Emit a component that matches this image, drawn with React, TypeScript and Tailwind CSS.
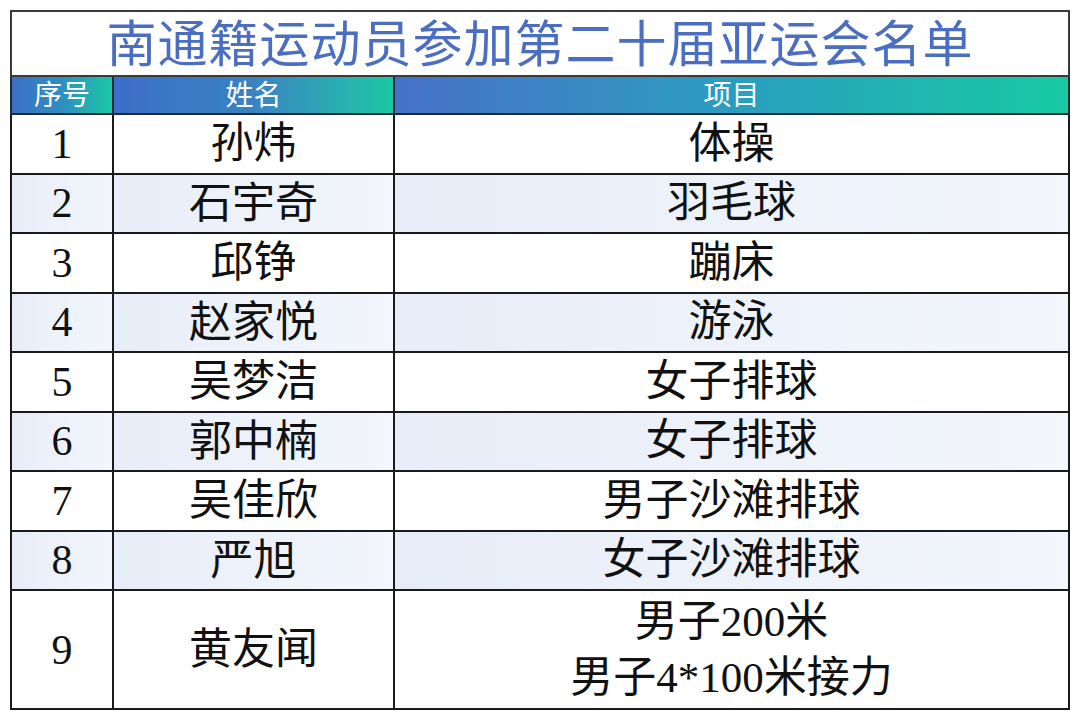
const rows: { no: number; name: string; events: string[] }[] = [
  { no: 1, name: '孙炜', events: ['体操'] },
  { no: 2, name: '石宇奇', events: ['羽毛球'] },
  { no: 3, name: '邱铮', events: ['蹦床'] },
  { no: 4, name: '赵家悦', events: ['游泳'] },
  { no: 5, name: '吴梦洁', events: ['女子排球'] },
  { no: 6, name: '郭中楠', events: ['女子排球'] },
  { no: 7, name: '吴佳欣', events: ['男子沙滩排球'] },
  { no: 8, name: '严旭', events: ['女子沙滩排球'] },
  { no: 9, name: '黄友闻', events: ['男子200米', '男子4*100米接力'] },
];

function Mixed({ text }: { text: string }) {
  const parts = text.split(/([0-9*]+)/).filter(Boolean);
  return (
    <>
      {parts.map((p, i) =>
        /^[0-9*]+$/.test(p) ? (
          <span key={i} className="font-[Liberation_Serif]">
            {p}
          </span>
        ) : (
          <span key={i}>{p}</span>
        )
      )}
    </>
  );
}

export default function App() {
  return (
    <div className="w-[1080px] h-[719px] bg-white pt-[10px] pl-[10px] font-['Liberation_Serif','Noto_Sans_CJK_SC',serif]">
      <table className="w-[1060px] border-collapse table-fixed">
        <colgroup>
          <col className="w-[102px]" />
          <col className="w-[281px]" />
          <col />
        </colgroup>
        <tbody>
          {/* Title */}
          <tr className="h-[65px]">
            <td
              colSpan={3}
              className="border-2 border-[#3a3a3a] text-center text-[50px] leading-none tracking-[1px] text-[#4b6ec1] pt-[2px]"
            >
              南通籍运动员参加第二十届亚运会名单
            </td>
          </tr>
          {/* Header */}
          <tr className="h-[38px] text-white text-[28px] leading-none">
            <td className="border-2 border-[#1f2a33] text-center pt-[2px] bg-gradient-to-r from-[#3b6fc6] via-[#2d8fc0] to-[#1cc7a2]">序号</td>
            <td className="border-2 border-[#1f2a33] text-center pt-[2px] bg-gradient-to-r from-[#3c6ec7] via-[#3a82c2] to-[#18c8a3]">姓名</td>
            <td className="border-2 border-[#1f2a33] text-center pt-[2px] bg-gradient-to-r from-[#4570c8] via-[#2a9dbf] to-[#17caa2]">项目</td>
          </tr>
          {rows.map((r) => {
            const shaded = r.no % 2 === 0;
            const bg = shaded ? 'bg-gradient-to-r from-[#e7edf8] to-[#f3f6fc]' : 'bg-white';
            const h = r.events.length > 1 ? 'h-[119px]' : 'h-[59.5px]';
            return (
              <tr key={r.no} className={`${h} text-[#111] leading-none`}>
                <td className={`border-2 border-[#1a1a1a] text-center text-[42px] ${bg}`}>{r.no}</td>
                <td className={`border-2 border-[#1a1a1a] text-center text-[43px] ${bg}`}>{r.name}</td>
                <td className={`border-2 border-[#1a1a1a] text-center text-[43px] ${bg}`}>
                  {r.events.map((e) => (
                    <div key={e} className="leading-[56px]">
                      <Mixed text={e} />
                    </div>
                  ))}
                </td>
              </tr>
            );
          })}
        </tbody>
      </table>
    </div>
  );
}
